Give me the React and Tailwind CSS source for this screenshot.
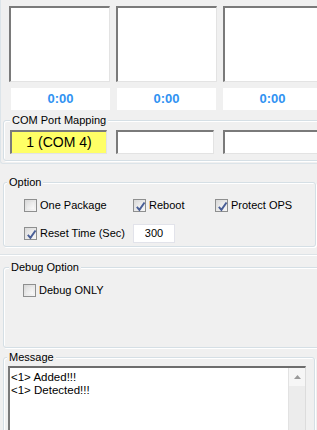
import React from "react";

const FONT = { fontFamily: '"Liberation Sans", Arial, sans-serif' };

function Group({ label, labelLeft = 6, className = "", children }) {
  return (
    <div
      className={
        "relative border border-[#d5dfe5] rounded-[3px] shadow-[inset_1px_1px_0_#ffffff,1px_1px_0_#ffffff] " +
        className
      }
    >
      <span
        className="absolute top-[-8px] px-[2px] bg-[#f0f0f0] text-[11px] leading-[14px] text-black"
        style={{ left: labelLeft }}
      >
        {label}
      </span>
      {children}
    </div>
  );
}

function CheckBox({ checked, label }) {
  return (
    <div className="flex items-center gap-[3px]">
      <div className="w-[13px] h-[13px] border border-[#8e8f8f] bg-gradient-to-br from-[#d9d9d9] to-[#f7f7f7] p-[2px] flex items-center justify-center">
        <div className="w-full h-full bg-gradient-to-br from-[#e0e0e0] to-[#fafafa] relative">
          {checked && (
            <svg
              viewBox="0 0 9 9"
              className="absolute left-[-1px] top-[-1px] w-[11px] h-[11px]"
            >
              <path
                d="M1.5 4.8 L3.6 7.3 L7.8 1.2"
                fill="none"
                stroke="#4a5f97"
                strokeWidth="1.6"
              />
            </svg>
          )}
        </div>
      </div>
      <span className="text-[11px] leading-[13px] text-black">{label}</span>
    </div>
  );
}

const sunken =
  "bg-white border-t-2 border-l-2 border-t-[#7a7a7a] border-l-[#7a7a7a] border-b border-r border-b-[#e3e3e3] border-r-[#e3e3e3]";

export default function App() {
  return (
    <div
      className="w-[317px] h-[430px] bg-[#f0f0f0] overflow-hidden flex flex-col"
      style={FONT}
    >
      {/* Top section */}
      <div className="h-[164px] border-l border-b border-[#dce4e9] rounded-bl-[3px] flex flex-col shrink-0">
        <div className="mt-[6px] h-[76px] flex pl-[8px] gap-[6px] shrink-0">
          <div className={"w-[101px] h-full shrink-0 " + sunken} />
          <div className={"w-[101px] h-full shrink-0 " + sunken} />
          <div className={"w-[101px] h-full shrink-0 " + sunken} />
        </div>
        <div className="mt-[6px] h-[22px] flex pl-[10px] gap-[7px] shrink-0">
          {[0, 1, 2].map((i) => (
            <div
              key={i}
              className="w-[99px] h-full shrink-0 bg-white flex items-center justify-center text-[13px] font-bold text-[#3092f2]"
            >
              0:00
            </div>
          ))}
        </div>
        <Group
          label="COM Port Mapping"
          labelLeft={6}
          className="mt-[10px] ml-[2px] h-[41px] w-[330px] shrink-0"
        >
          <div className="flex pt-[9px] pl-[6px] gap-[9px]">
            <div
              className={
                "w-[97px] h-[24px] shrink-0 flex items-center justify-center text-[14px] text-black " +
                sunken.replace("bg-white", "bg-[#ffff66]")
              }
            >
              1 (COM 4)
            </div>
            <div className={"w-[98px] h-[24px] shrink-0 " + sunken} />
            <div className={"w-[98px] h-[24px] shrink-0 " + sunken} />
          </div>
        </Group>
      </div>

      {/* Option */}
      <Group
        label="Option"
        labelLeft={3}
        className="mt-[18px] ml-[3px] w-[313px] h-[65px] shrink-0"
      >
        <div className="pt-[16px] pl-[20px] flex flex-col gap-[12px]">
          <div className="flex">
            <div className="w-[109px]">
              <CheckBox label="One Package" />
            </div>
            <div className="w-[82px]">
              <CheckBox checked label="Reboot" />
            </div>
            <CheckBox checked label="Protect OPS" />
          </div>
          <div className="flex items-center">
            <div className="w-[109px]">
              <CheckBox checked label="Reset Time (Sec)" />
            </div>
            <div className="w-[42px] h-[19px] bg-white border border-[#e2e3ea] flex items-center justify-center text-[11px] text-black">
              300
            </div>
          </div>
        </div>
      </Group>

      <div className="mt-[7px] h-[2px] border-t border-[#dde3e7] border-b border-b-white shrink-0" />

      {/* Debug Option */}
      <Group
        label="Debug Option"
        labelLeft={5}
        className="mt-[11px] ml-[3px] w-[330px] h-[81px] shrink-0"
      >
        <div className="pt-[16px] pl-[19px]">
          <CheckBox label="Debug ONLY" />
        </div>
      </Group>

      {/* Message */}
      <Group
        label="Message"
        labelLeft={3}
        className="mt-[9px] ml-[3px] w-[312px] h-[120px] shrink-0"
      >
        <div className="pt-[8px] pl-[4px]">
          <div className="w-[298px] h-[100px] bg-white border-t-2 border-l-2 border-t-[#6d6d6d] border-l-[#7a7a7a] border-r border-r-[#dcdcdc] flex">
            <div className="flex-1 pl-[1px] pt-[3px] text-[11.5px] leading-[13px] text-black">
              <div>&lt;1&gt; Added!!!</div>
              <div>&lt;1&gt; Detected!!!</div>
            </div>
            <div className="w-[17px] h-full bg-[#ececec] border-l border-[#e2e2e2] flex flex-col">
              <div className="h-[18px] bg-[#f6f6f6] flex items-center justify-center">
                <svg viewBox="0 0 7 4" className="w-[7px] h-[4px]">
                  <path d="M0 4 L3.5 0 L7 4 Z" fill="#9a9a9a" />
                </svg>
              </div>
            </div>
          </div>
        </div>
      </Group>
    </div>
  );
}
